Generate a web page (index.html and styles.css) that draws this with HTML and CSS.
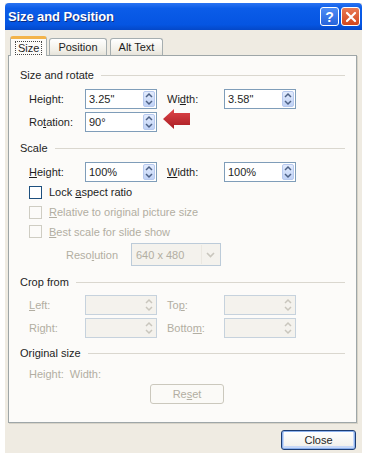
FILE: index.html
```html
<!DOCTYPE html>
<html>
<head>
<meta charset="utf-8">
<link rel="stylesheet" href="styles.css">
</head>
<body>
<div class="dialog">
  <div class="titlebar">
    <span class="title">Size and Position</span>
    <div class="tbtns">
      <span class="tbtn help">?</span>
      <span class="tbtn close">
        <svg width="12" height="12" viewBox="0 0 12 12"><path d="M2 2 L10 10 M10 2 L2 10" stroke="#fff" stroke-width="2.2" stroke-linecap="round"/></svg>
      </span>
    </div>
  </div>
  <div class="client">
    <div class="tabs">
      <div class="tab active"><span class="focus">Size</span></div>
      <div class="tab">Position</div>
      <div class="tab">Alt Text</div>
    </div>
    <div class="panel">
      <div class="group g1"><span>Size and rotate</span><i></i></div>
      <div class="fields f1">
        <label>Hei<u>g</u>ht:</label>
        <div class="spin"><span>3.25"</span><b class="sb"></b></div>
        <label>Wi<u>d</u>th:</label>
        <div class="spin"><span>3.58"</span><b class="sb"></b></div>
        <label>Ro<u>t</u>ation:</label>
        <div class="spin rot"><span>90°</span><b class="sb"></b>
          <svg class="arrow" width="30" height="22" viewBox="0 0 30 22">
            <defs><linearGradient id="ag" x1="0" y1="0" x2="0" y2="1"><stop offset="0" stop-color="#e0464a"/><stop offset="1" stop-color="#a81c22"/></linearGradient></defs>
            <path d="M0 11 L11 1 L11 5 L27 5 L27 17 L11 17 L11 21 Z" fill="url(#ag)"/>
          </svg>
        </div>
      </div>
      <div class="group g2"><span>Scale</span><i></i></div>
      <div class="fields f2">
        <label><u>H</u>eight:</label>
        <div class="spin"><span>100%</span><b class="sb"></b></div>
        <label><u>W</u>idth:</label>
        <div class="spin"><span>100%</span><b class="sb"></b></div>
      </div>
      <div class="check"><span class="box"></span><span>Lock <u>a</u>spect ratio</span></div>
      <div class="check dis"><span class="box"></span><span><u>R</u>elative to original picture size</span></div>
      <div class="check dis last"><span class="box"></span><span><u>B</u>est scale for slide show</span></div>
      <div class="resrow">
        <label>Reso<u>l</u>ution</label>
        <div class="select"><span>640 x 480</span><b class="dd"><svg width="9" height="6" viewBox="0 0 9 6"><path d="M1 1 L4.5 4.5 L8 1" stroke="#c9c6bd" stroke-width="1.6" fill="none"/></svg></b></div>
      </div>
      <div class="group g3"><span>Crop from</span><i></i></div>
      <div class="fields f3 dis">
        <label><u>L</u>eft:</label>
        <div class="spin off"><span></span><b class="sb"></b></div>
        <label>To<u>p</u>:</label>
        <div class="spin off"><span></span><b class="sb"></b></div>
        <label>Ri<u>g</u>ht:</label>
        <div class="spin off"><span></span><b class="sb"></b></div>
        <label>Botto<u>m</u>:</label>
        <div class="spin off"><span></span><b class="sb"></b></div>
      </div>
      <div class="group g4"><span>Original size</span><i></i></div>
      <div class="orig"><span>Height:</span><span>Width:</span></div>
      <div class="resetrow"><div class="btn reset">Re<u>s</u>et</div></div>
    </div>
    <div class="footer"><div class="btn closebtn">Close</div></div>
  </div>
</div>
</body>
</html>
```
FILE: styles.css
```css
html, body {
  margin: 0;
  padding: 0;
  background: #fff;
}
body {
  font-family: "Liberation Sans", Arial, sans-serif;
  font-size: 11px;
  color: #1e1e1e;
}
u { text-decoration: underline; text-underline-offset: 1px; }
.dialog {
  margin: 3px 0 0 5px;
  width: 357px;
  height: 450px;
  display: flex;
  flex-direction: column;
  background: #efebe2;
}
.titlebar {
  height: 27px;
  flex: none;
  background: linear-gradient(#2a73f2 0%, #0b5ce8 20%, #0555e2 80%, #0448c8 100%);
  border-radius: 4px 4px 0 0;
  display: flex;
  align-items: center;
  justify-content: space-between;
  padding: 0 2px 0 3px;
}
.title {
  color: #fff;
  font-weight: bold;
  font-size: 13px;
  text-shadow: 1px 1px 0 #0a2a80;
  letter-spacing: -0.1px;
}
.tbtns { display: flex; gap: 2px; }
.tbtn {
  width: 19px;
  height: 19px;
  border: 1px solid #fff;
  border-radius: 3px;
  display: flex;
  align-items: center;
  justify-content: center;
  box-sizing: border-box;
}
.help {
  background: linear-gradient(#4f8df5, #2663dc);
  color: #fff;
  font-weight: bold;
  font-size: 14px;
}
.close { background: linear-gradient(#e97a54, #d1461c); }
.client {
  flex: 1;
  display: flex;
  flex-direction: column;
  padding: 6px 5px 0 3px;
}
.tabs {
  display: flex;
  align-items: flex-end;
  height: 19px;
  padding-left: 2px;
  gap: 2px;
  position: relative;
  z-index: 1;
}
.tab {
  height: 17px;
  box-sizing: border-box;
  border: 1px solid #a6aeb0;
  border-bottom: none;
  border-radius: 3px 3px 0 0;
  background: linear-gradient(#ffffff, #f1efe8 70%, #e6e3da);
  display: flex;
  align-items: center;
  justify-content: center;
  padding: 0 8px;
  color: #1e1e1e;
}
.tab + .tab + .tab { margin-left: 1px; }
.tab.active {
  height: 20px;
  margin-bottom: -1px;
  background: #fcfbf9;
  border-top: 3px solid #f3b34a;
  padding: 0 4px;
}
.focus {
  border: 1px dotted #444;
  padding: 0 2px;
  line-height: 12px;
}
.panel {
  height: 368px;
  box-sizing: border-box;
  border: 1px solid #9ea6a8;
  background: #fcfbf9;
  padding: 0 11px 0 11px;
  box-shadow: 1px 1px 0 #d7d3c8;
}
.group {
  display: flex;
  align-items: center;
  height: 14px;
  gap: 7px;
}
.group i {
  flex: 1;
  height: 1px;
  background: #dad7cf;
}
.g1 { margin-top: 12px; }
.g2 { margin-top: 9px; }
.g3 { margin-top: 9px; }
.g4 { margin-top: 8px; }
.fields {
  display: grid;
  grid-template-columns: 56px 72px 67px 72px;
  grid-auto-rows: 20px;
  row-gap: 3px;
  padding-left: 9px;
  margin-top: 7px;
  align-items: center;
}
.fields label:nth-of-type(even) { padding-left: 10px; }
.f3 { margin-top: 6px; }
.spin {
  height: 20px;
  box-sizing: border-box;
  border: 1px solid #7f9db9;
  background: #fff;
  display: flex;
  align-items: center;
  justify-content: space-between;
  padding: 0 1px 0 3px;
  position: relative;
}
.sb {
  width: 12px;
  height: 16px;
  border-radius: 2px;
  background:
    url("data:image/svg+xml,%3Csvg xmlns='http://www.w3.org/2000/svg' width='12' height='16'%3E%3Cpath d='M3 6 L6 3 L9 6 M3 10 L6 13 L9 10' stroke='%234d6185' stroke-width='1.5' fill='none'/%3E%3C/svg%3E") no-repeat center,
    linear-gradient(#e2ebfd, #c0d2f6);
  border: 1px solid #b7c9ee;
  box-sizing: border-box;
}
.spin.off {
  background: #f4f2ed;
  border-color: #c6d2dd;
}
.spin.off .sb {
  background:
    url("data:image/svg+xml,%3Csvg xmlns='http://www.w3.org/2000/svg' width='12' height='16'%3E%3Cpath d='M3 6 L6 3 L9 6 M3 10 L6 13 L9 10' stroke='%23c9c6bd' stroke-width='1.5' fill='none'/%3E%3C/svg%3E") no-repeat center;
  border-color: transparent;
}
.arrow {
  position: absolute;
  left: 77px;
  top: -5px;
}
.dis, .dis label { color: #b2aea2; }
.check {
  display: flex;
  align-items: center;
  gap: 7px;
  height: 20px;
  padding-left: 9px;
}
.check.last { height: 19px; }
.box {
  width: 13px;
  height: 13px;
  box-sizing: border-box;
  border: 1px solid #1d4f7e;
  background: #fff;
}
.check.dis .box { border-color: #cfcdc3; background: #fcfbf9; }
.resrow {
  display: flex;
  align-items: center;
  margin-top: 2px;
  padding-left: 46px;
  gap: 13px;
  height: 23px;
  color: #b2aea2;
}
.select {
  width: 90px;
  height: 23px;
  box-sizing: border-box;
  border: 1px solid #bccbd9;
  background: #f4f2ed;
  display: flex;
  align-items: center;
  justify-content: space-between;
  padding: 0 1px 0 4px;
}
.dd {
  width: 17px;
  height: 19px;
  display: flex;
  align-items: center;
  justify-content: center;
  border-left: 1px solid #ebe8e1;
}
.orig {
  display: flex;
  gap: 6px;
  margin-top: 7px;
  padding-left: 9px;
  height: 14px;
  align-items: center;
  color: #b2aea2;
}
.resetrow {
  display: flex;
  padding-left: 130px;
  margin-top: 3px;
}
.btn {
  height: 20px;
  box-sizing: border-box;
  display: flex;
  align-items: center;
  justify-content: center;
  border-radius: 3px;
}
.reset {
  width: 74px;
  border: 1px solid #cbc8bd;
  color: #b2aea2;
  background: #fbfaf7;
}
.footer {
  display: flex;
  justify-content: flex-end;
  padding-top: 7px;
  padding-right: 1px;
}
.closebtn {
  width: 75px;
  border: 1px solid #1c3c74;
  background: linear-gradient(#ffffff, #f3f2ee 80%, #dedbd0);
  box-shadow: inset 0 0 0 1px #8cb1ec, inset 0 -1px 0 2px #c7d8f8;
  color: #1e1e1e;
}
```
